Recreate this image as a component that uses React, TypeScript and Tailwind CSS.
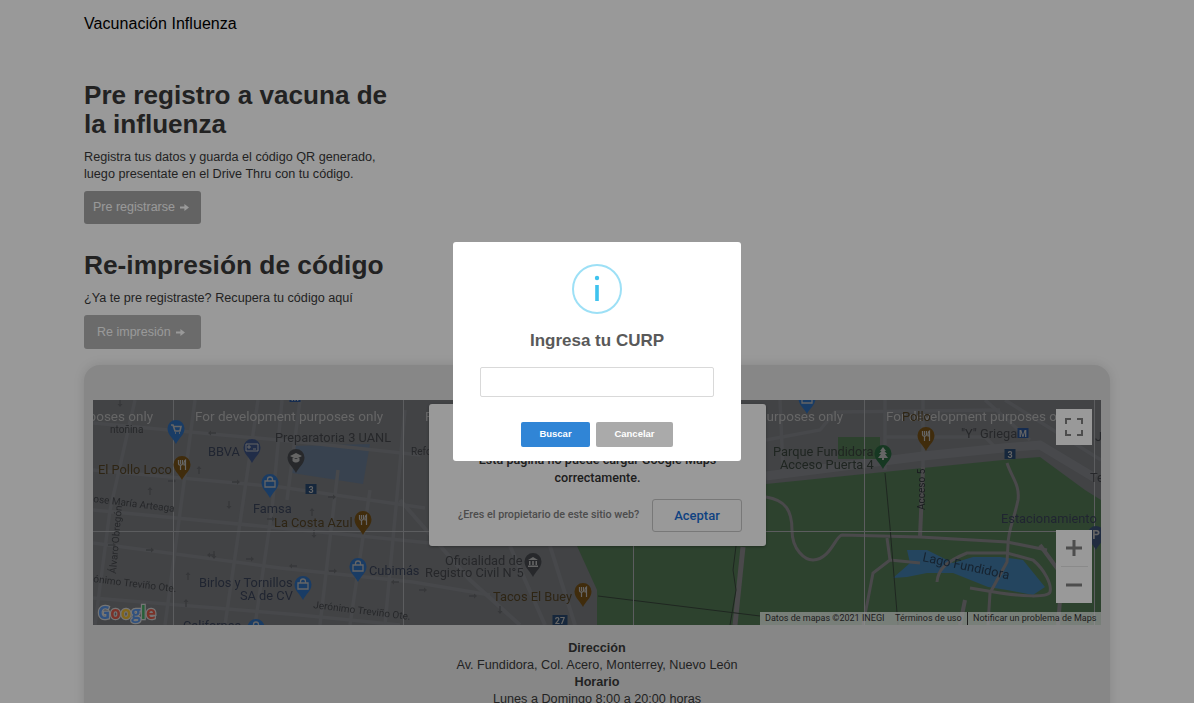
import React from "react";

type PinKind = "cart" | "card" | "fork" | "bag" | "grad" | "bank" | "tree" | "P";

const PIN_COLORS: Record<string, string> = {
  blue: "#2a64a8",
  navy: "#384c78",
  brown: "#6c4a14",
  gray: "#414448",
  green: "#265e3a",
  slate: "#364a6c",
};

function Pin({ x, y, color, kind }: { x: number; y: number; color: string; kind: PinKind }) {
  const c = "#a8a8a8";
  return (
    <g transform={`translate(${x} ${y})`}>
      <path d="M0 15 C-2 10 -8.5 6 -8.5 -0.5 A8.5 8.5 0 1 1 8.5 -0.5 C8.5 6 2 10 0 15Z" fill={PIN_COLORS[color]} />
      {kind === "cart" && <path d="M-5 -4H-3L-1 2H4L5 -2.5H-2.5M-1 4h1M3 4h1" stroke={c} strokeWidth="1.6" fill="none" />}
      {kind === "card" && <path d="M-6 -4H6V3H-6Z M-4 -2h2v2h-2Z M1 1h3" stroke={c} strokeWidth="1" fill="none" />}
      {kind === "fork" && <path d="M-3.5 -5V-1.5A1.5 1.5 0 0 0 -1.5 0V5M-1.5 -5V-1M0.5 -5V-1.5A1.5 1.5 0 0 1 -1.5 0M3.5 5V-5C2 -4 1.8 -1 2 0H3.5" stroke={c} strokeWidth="1.2" fill="none" />}
      {kind === "bag" && <path d="M-5 -2H5V4H-5ZM-2.5 -2V-3.5A2.5 2.5 0 0 1 2.5 -3.5V-2" stroke={c} strokeWidth="1.3" fill="none" />}
      {kind === "grad" && <path d="M-6 -2L0 -5L6 -2L0 1ZM-3.5 0V3C-1 5 1 5 3.5 3V0" fill={c} />}
      {kind === "bank" && <path d="M-5 -2L0 -5L5 -2ZM-4 -1H-2.5V3H-4ZM-0.8 -1H0.8V3H-0.8ZM2.5 -1H4V3H2.5ZM-5 3.5H5V5H-5Z" fill={c} />}
      {kind === "tree" && <path d="M0 -7L3 -3H1.5L4 0H2L5 4H1V6H-1V4H-5L-2 0H-4L-1.5 -3H-3Z" fill={c} />}
      {kind === "P" && (
        <text x="0" y="4" textAnchor="middle" fontSize="12" fontWeight="700" fill={c} fontFamily="Roboto, sans-serif">
          P
        </text>
      )}
    </g>
  );
}

function Label({ x, y, fill = "#404246", size = 12.8, children, rotate, anchor }: { x: number; y: number; fill?: string; size?: number; children: React.ReactNode; rotate?: number; anchor?: "middle" | "end" }) {
  return (
    <text x={x} y={y} fill={fill} fontSize={size} fontFamily="Roboto, sans-serif" textAnchor={anchor} transform={rotate !== undefined ? `rotate(${rotate} ${x} ${y})` : undefined}>
      {children}
    </text>
  );
}

function Badge({ x, y, w = 11, text, fill = "#254264" }: { x: number; y: number; w?: number; text: string; fill?: string }) {
  return (
    <g>
      <rect x={x - w / 2} y={y - 5} width={w} height={10} fill={fill} />
      <text x={x} y={y + 3.5} textAnchor="middle" fontSize="9" fontWeight="700" fill="#a8a8a8" fontFamily="Roboto, sans-serif">
        {text}
      </text>
    </g>
  );
}

const ROAD = "#77797d";
const ARROW = "#5c5e62";
const BLUE_TEXT = "#363e52";
const BROWN_TEXT = "#4e3e22";

function MapDrawing() {
  const hStreets = [
    "M93 423L300 442L420 455",
    "M93 470L280 487L425 508",
    "M93 510L280 528L430 543",
    "M93 543L280 568L413 582L490 595",
    "M93 598L300 615L400 625",
  ];
  const vStreets = [
    "M135 400L110 510L95 625",
    "M195 400L165 625",
    "M258 400L225 625",
    "M282 400L272 510L255 625",
    "M338 470L320 625",
    "M405 410L385 625",
    "M300 400L287 500",
    "M370 490L350 625",
  ];
  const arrows: [number, number, number][] = [
    [120, 403, 90], [150, 491, -90], [172, 481, 0], [236, 482, 0], [212, 433, 180], [199, 470, -90], [112, 545, 0],
    [150, 550, 0], [214, 555, 90], [229, 505, 90], [188, 576, -90], [186, 603, -90], [211, 555, 180], [250, 559, 0],
    [293, 566, 180], [333, 571, 0], [395, 582, 180], [423, 590, 0], [473, 596, 0], [500, 610, 90], [312, 512, -90],
    [332, 497, 0], [271, 519, 0], [314, 534, 90],
  ];
  return (
    <svg viewBox="93 400 1008 225" className="block h-full w-full blur-[0.4px]">
      <rect x="93" y="400" width="1008" height="225" fill="#6e7074" />
      {/* water block near the prepa */}
      <path d="M292 446L370 444L363 484L292 473Z" fill="#5e6e84" />
      {/* city streets */}
      <g stroke={ROAD} fill="none" strokeWidth="3.5">
        {hStreets.map((d) => (
          <path key={d} d={d} />
        ))}
        {vStreets.map((d) => (
          <path key={d} d={d} />
        ))}
        <path d="M400 500L470 580L520 625" strokeWidth="4" />
        <path d="M550 546L575 625M510 546L545 625" strokeWidth="4" />
      </g>
      {arrows.map(([x, y, r]) => (
        <path key={`${x}-${y}`} transform={`translate(${x} ${y}) rotate(${r})`} d="M-4 -0.7H1V-2.5L4 0L1 2.5V0.7H-4Z" fill={ARROW} />
      ))}
      {/* strip roads above the park */}
      <g stroke={ROAD} fill="none" strokeWidth="3.5">
        <path d="M766 440L820 430L835 412L1000 410" />
        <path d="M780 400L783 470M885 400L885 470M923 400L923 468" />
        <path d="M885 437H985L1000 452" />
        <path d="M1005 400L1045 425L1101 460" />
        <path d="M985 400L1030 440" />
      </g>
      <path d="M766 476L923 456L1003 448L1040 445L1095 478" stroke="#797b7f" strokeWidth="9" fill="none" />
      {/* park */}
      <path d="M597 625L597 590L577 546L560 500L766 484L923 468L1003 460L1040 457L1085 490L1101 500V625Z" fill="#4c6e4e" />
      <rect x="838" y="437" width="42" height="22" fill="#4c6e4e" />
      <path d="M907 550L927 550L953 563L973 557L1000 557L1023 560L1045 587L1033 595L1007 590L988 587L953 573L927 573L907 577L893 578L910 563Z" fill="#3c749e" />
      <g stroke="#7c7a7e" fill="none" strokeWidth="3">
        <path d="M766 497C785 500 792 510 792 530C792 550 805 560 813 560C830 560 836 535 842 535L920 537L1007 542L1047 550" />
        <path d="M1007 463C1012 478 1020 485 1018 500C1014 520 1008 530 1008 545L1007 562L990 593L988 625" />
        <path d="M937 582C938 570 945 562 967 553L1007 553L1033 560C1045 570 1052 585 1050 592C1048 598 1020 596 1000 593L970 588" />
        <path d="M923 467L920 537" strokeWidth="4" />
        <path d="M890 560L920 563M887 538L890 560L873 573L863 625" />
        <path d="M743 547L735 625" strokeWidth="5" />
        <path d="M1058 625L1062 575L1040 545" strokeWidth="4" />
        <path d="M960 625L965 600" strokeWidth="4" />
      </g>
      <g stroke="#334036" fill="none" strokeWidth="1">
        <path d="M885 473L890 527L898 625" />
        <path d="M598 596L760 616" />
        <path d="M736 546L733 570L736 590L730 625" />
      </g>
      {/* tile lines */}
      <g stroke="#9a9c9e" strokeWidth="1">
        <path d="M173.5 400V625M403.5 400V625M633.5 400V625M864.5 400V625M1094.5 400V625M93 531.5H1101" />
      </g>
      {/* development watermark */}
      <g fill="#aaaaaa" fontSize="13.5" fontFamily="Roboto, sans-serif">
        <text x="-35" y="421">For development purposes only</text>
        <text x="195" y="421">For development purposes only</text>
        <text x="425" y="421">For development purposes only</text>
        <text x="655" y="421">For development purposes only</text>
        <text x="886" y="421">For development purposes only</text>
      </g>
      {/* labels */}
      <Label x={203} y={399} fill={BLUE_TEXT}>Felix U. Gomez</Label>
      <Badge x={295} y={397} text="M" fill="#254a84" />
      <Label x={275} y={442}>Preparatoria 3 UANL</Label>
      <Label x={208} y={456} fill={BLUE_TEXT}>BBVA</Label>
      <Label x={98} y={474} fill={BROWN_TEXT}>El Pollo Loco</Label>
      <Label x={253} y={513} fill={BLUE_TEXT}>Famsa</Label>
      <Label x={274} y={527} fill={BROWN_TEXT}>La Costa Azul</Label>
      <Label x={199} y={587} fill={BLUE_TEXT}>Birlos y Tornillos</Label>
      <Label x={240} y={600} fill={BLUE_TEXT}>SA de CV</Label>
      <Label x={369} y={575} fill={BLUE_TEXT}>Cubimás</Label>
      <Label x={445} y={565}>Oficialidad de</Label>
      <Label x={425} y={577}>Registro Civil N°5</Label>
      <Label x={493} y={601} fill={BROWN_TEXT}>Tacos El Buey</Label>
      <Label x={183} y={630} fill={BLUE_TEXT}>Californas</Label>
      <Label x={773} y={456} fill="#343e37">Parque Fundidora</Label>
      <Label x={780} y={469} fill="#343e37">Acceso Puerta 4</Label>
      <Label x={961} y={438}>"Y" Griega</Label>
      <Label x={1001} y={523} fill={BLUE_TEXT}>Estacionamiento</Label>
      <Label x={922} y={561} rotate={12} fill="#263a50">Lago Fundidora</Label>
      <Label x={925} y={510} size={10} rotate={-90} fill="#2c3236">Acceso 5</Label>
      <Label x={93} y={502} size={10} rotate={7}>ose María Arteaga</Label>
      <Label x={93} y={582} size={10} rotate={7}>ónimo Treviño Ote.</Label>
      <Label x={313} y={608} size={10} rotate={7}>Jerónimo Treviño Ote.</Label>
      <Label x={116} y={574} size={10} rotate={-85}>Álvaro Obregón</Label>
      <Label x={411} y={455} size={10}>Refo</Label>
      <Label x={1090} y={482}>Te</Label>
      <Label x={1095} y={441}>Ja</Label>
      <Label x={110} y={433} size={10}>ntoñina</Label>
      <Label x={902} y={421} fill={BROWN_TEXT}>Pollo</Label>
      {/* pins */}
      <Pin x={176} y={429} color="blue" kind="cart" />
      <Pin x={252} y={448} color="navy" kind="card" />
      <Pin x={182} y={465} color="brown" kind="fork" />
      <Pin x={270} y={483} color="blue" kind="bag" />
      <Pin x={296} y={458} color="gray" kind="grad" />
      <Pin x={363} y={520} color="brown" kind="fork" />
      <Pin x={358} y={567} color="blue" kind="bag" />
      <Pin x={303} y={585} color="blue" kind="bag" />
      <Pin x={256} y={628} color="blue" kind="bag" />
      <Pin x={533} y={562} color="gray" kind="bank" />
      <Pin x={583} y={592} color="brown" kind="fork" />
      <Pin x={883} y={454} color="green" kind="tree" />
      <Pin x={926} y={436} color="brown" kind="fork" />
      <Pin x={807} y={399} color="blue" kind="bag" />
      <Pin x={1096} y={535} color="slate" kind="P" />
      <Badge x={311} y={489} text="3" />
      <Badge x={560} y={620} w={15} text="27" />
      <Badge x={1010} y={454} text="3" />
      <Badge x={1023} y={433} w={11} text="M" fill="#254a84" />
      {/* google wordmark */}
      <text x="98" y="619" fontSize="18" fontWeight="700" fontFamily="'Open Sans', sans-serif" stroke="#c4c4c4" strokeWidth="2.5" paintOrder="stroke" textLength="58" lengthAdjust="spacingAndGlyphs">
        <tspan fill="#5088d4">G</tspan>
        <tspan fill="#cc5444">o</tspan>
        <tspan fill="#d8aa30">o</tspan>
        <tspan fill="#5088d4">g</tspan>
        <tspan fill="#429e5e">l</tspan>
        <tspan fill="#cc5444">e</tspan>
      </text>
    </svg>
  );
}

function MapPanel() {
  return (
    <div className="relative h-[225px] w-[1008px] overflow-hidden bg-[#6e7074]">
      <MapDrawing />
      {/* Google's error dialog */}
      <div className="absolute left-[336px] top-[4px] flex h-[142px] w-[337px] flex-col justify-end rounded-[3px] bg-white pb-[14px] pl-[29px] pr-[24px] font-['Roboto',sans-serif] shadow-[0_1px_3px_rgba(0,0,0,0.3)]">
        <p className="mb-[12px] -ml-[5px] text-center text-[12.6px] font-medium leading-[18px] text-[#333]">
          Esta página no puede cargar Google Maps correctamente.
        </p>
        <div className="flex items-center justify-between">
          <span className="whitespace-nowrap text-[10.75px] font-medium text-[#808080]">¿Eres el propietario de este sitio web?</span>
          <span className="flex h-[33px] w-[90px] items-center justify-center rounded-[3px] border border-[#c8c8c8] text-[13px] font-medium text-[#1a6fd8]">
            Aceptar
          </span>
        </div>
      </div>
      {/* fullscreen */}
      <div className="absolute left-[963px] top-[9px] flex h-[36px] w-[36px] items-center justify-center bg-white">
        <svg width="18" height="18" viewBox="0 0 18 18" fill="none" stroke="#808080" strokeWidth="2">
          <path d="M1 6V1H6M12 1H17V6M17 12V17H12M6 17H1V12" />
        </svg>
      </div>
      {/* zoom */}
      <div className="absolute left-[963px] top-[130px] flex h-[73px] w-[36px] flex-col items-center bg-white">
        <div className="flex h-[36px] w-full items-center justify-center">
          <svg width="18" height="18" viewBox="0 0 18 18" fill="#808080">
            <path d="M7.5 1H10.5V7.5H17V10.5H10.5V17H7.5V10.5H1V7.5H7.5Z" />
          </svg>
        </div>
        <div className="h-px w-[27px] bg-[#e6e6e6]" />
        <div className="flex h-[36px] w-full items-center justify-center">
          <svg width="18" height="18" viewBox="0 0 18 18" fill="#808080">
            <path d="M1 7.5H17V10.5H1Z" />
          </svg>
        </div>
      </div>
      {/* attribution */}
      <div className="absolute bottom-0 right-0 flex h-[13px] w-[341px] items-center bg-white/70 pl-[5px] font-['Roboto',sans-serif] text-[9px] leading-[13px] text-[#333]">
        <span className="w-[130px] whitespace-nowrap">Datos de mapas ©2021 INEGI</span>
        <span className="w-[72px] whitespace-nowrap">Términos de uso</span>
        <span className="h-full w-px bg-[#333]" />
        <span className="ml-[5px] whitespace-nowrap">Notificar un problema de Maps</span>
      </div>
    </div>
  );
}

function ActionButton({ label, bg, pad }: { label: string; bg: string; pad: string }) {
  return (
    <span className={`flex w-[117px] items-center gap-[5px] rounded-[3px] text-[12.5px] text-white ${bg} ${pad}`}>
      {label}
      <svg width="9" height="9" viewBox="0 0 9 9" fill="currentColor">
        <path d="M0 3.4H4.4V1L9 4.5L4.4 8V5.6H0Z" />
      </svg>
    </span>
  );
}

export default function App() {
  return (
    <div className="relative h-[703px] w-full overflow-hidden bg-white font-['Liberation_Sans',Arial,sans-serif] text-[#3a3a3a]">
      <div className="mx-auto w-[1026px]">
        <header className="flex h-[47px] items-center text-[16px] tracking-[0.05px] text-black">Vacunación Influenza</header>

        <section className="mt-[34px] w-[320px]">
          <h1 className="text-[26.1px] font-bold leading-[29px]">Pre registro a vacuna de la influenza</h1>
          <p className="mt-[10px] text-[12.65px] leading-[16.5px]">
            Registra tus datos y guarda el código QR generado, luego presentate en el Drive Thru con tu código.
          </p>
          <div className="mt-[9px]">
            <ActionButton label="Pre registrarse" bg="bg-[#a6a6a6]" pad="h-[33px] pl-[9px]" />
          </div>
        </section>

        <section className="mt-[27px]">
          <h2 className="text-[26.3px] font-bold leading-[29px]">Re-impresión de código</h2>
          <p className="mt-[10px] text-[12.65px] leading-[16px]">¿Ya te pre registraste? Recupera tu código aquí</p>
          <div className="mt-[9px]">
            <ActionButton label="Re impresión" bg="bg-[#b2b2b2]" pad="h-[34px] pl-[13px]" />
          </div>
        </section>

        <section className="mt-[16px] rounded-[16px] bg-[#e1e1e1] px-[9px] pb-[20px] pt-[35px] shadow-[0_0_12px_rgba(0,0,0,0.12)]">
          <MapPanel />
          <div className="mt-[15px] text-center text-[12.65px] leading-[17px]">
            <div className="font-bold">Dirección</div>
            <div>Av. Fundidora, Col. Acero, Monterrey, Nuevo León</div>
            <div className="font-bold">Horario</div>
            <div>Lunes a Domingo 8:00 a 20:00 horas</div>
          </div>
        </section>
      </div>

      {/* modal backdrop */}
      <div className="absolute inset-0 flex items-start justify-center bg-black/40">
        <div className="mt-[242px] flex h-[219px] w-[288px] flex-col items-center rounded-[3px] bg-white pt-[22px]">
          <svg width="50" height="50" viewBox="0 0 50 50" fill="none">
            <circle cx="25" cy="25" r="24" stroke="#9de0f6" strokeWidth="2" />
            <circle cx="25" cy="14" r="2.2" fill="#3fc3ee" />
            <rect x="23.2" y="21" width="3.6" height="16" fill="#3fc3ee" />
          </svg>
          <h3 className="mt-[17px] text-[17px] font-bold leading-[20px] text-[#595959]">Ingresa tu CURP</h3>
          <input className="mt-[16px] h-[30px] w-[234px] rounded-[2px] border border-[#d9d9d9] bg-white outline-none" />
          <div className="mt-[25px] flex gap-[6px]">
            <span className="flex h-[25px] w-[69px] items-center justify-center rounded-[2px] bg-[#3085d6] text-[9.5px] font-bold text-white">Buscar</span>
            <span className="flex h-[25px] w-[77px] items-center justify-center rounded-[2px] bg-[#aaaaaa] text-[9.5px] font-bold text-white">Cancelar</span>
          </div>
        </div>
      </div>
    </div>
  );
}
